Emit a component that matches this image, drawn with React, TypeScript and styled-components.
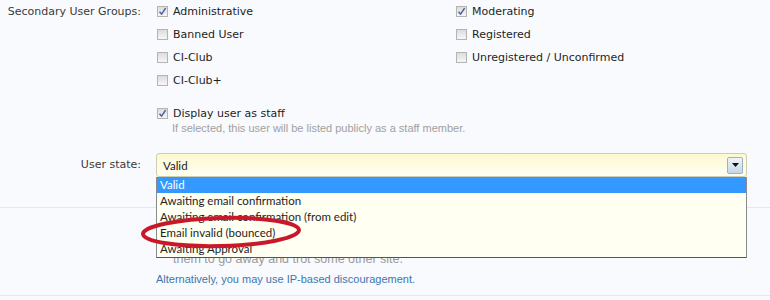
import React from "react";
import styled, { createGlobalStyle } from "styled-components";

const Global = createGlobalStyle`
  html, body { margin: 0; padding: 0; background: #f9fafd; }
  body { font-family: "DejaVu Sans", Verdana, sans-serif; font-size: 11px; color: #2b2b2b; }
  * { box-sizing: border-box; }
`;

const Page = styled.div`
  position: relative;
  width: 770px;
  height: 300px;
  overflow: hidden;
`;

const FormRow = styled.div<{ $top?: number }>`
  display: grid;
  grid-template-columns: 141px 1fr;
  column-gap: 15px;
  margin-top: ${(p) => p.$top ?? 0}px;
  padding-right: 23px;
`;

const Label = styled.div<{ $h: number }>`
  text-align: right;
  color: #3a3a3a;
  line-height: ${(p) => p.$h}px;
  white-space: nowrap;
`;

const Groups = styled.div`
  display: grid;
  grid-template-columns: 299px 1fr;
  grid-template-rows: repeat(4, 23px);
  grid-auto-flow: column;
`;

const Choice = styled.label<{ $h?: number }>`
  display: flex;
  align-items: center;
  gap: 5px;
  height: ${(p) => p.$h ?? 23}px;
  padding-left: 1px;
  color: #1e1e1e;
  white-space: nowrap;
`;

const Box = styled.span`
  display: inline-flex;
  align-items: center;
  justify-content: center;
  width: 11px;
  height: 11px;
  border: 1px solid #b4b4b4;
  background: linear-gradient(#dcdcdc, #f6f6f6);
  flex: none;
`;

const Hint = styled.div`
  font-family: "Liberation Sans", Arial, sans-serif;
  font-size: 11px;
  color: #a0a0a0;
  line-height: 12px;
  padding-left: 16px;
  white-space: nowrap;
`;

const StaffBlock = styled.div`
  margin-top: 12px;
`;

const SelectWrap = styled.div`
  position: relative;
`;

const Select = styled.div`
  display: flex;
  align-items: center;
  justify-content: space-between;
  height: 24px;
  padding: 0 3px 0 6px;
  border: 1px solid #cfcdb0;
  border-radius: 3px;
  background: linear-gradient(#fcf9cf, #fffff2);
  font-family: Lato, "Open Sans", sans-serif;
  font-size: 11.5px;
  color: #222;
`;

const ArrowButton = styled.span`
  display: flex;
  align-items: center;
  justify-content: center;
  width: 16px;
  height: 17px;
  border: 1px solid #9fb0c2;
  border-radius: 2px;
  background: linear-gradient(#eef4fa, #c6d7e8);
`;

const List = styled.div`
  position: absolute;
  left: 0;
  right: 0;
  top: 24px;
  z-index: 2;
  background: #fffff2;
  border: 1px solid #8a8a8a;
  border-top: none;
  border-bottom-color: #555;
  font-family: Lato, "Open Sans", sans-serif;
  font-size: 11.5px;
`;

const Option = styled.div<{ $active?: boolean }>`
  height: 16px;
  line-height: 16px;
  padding-left: 3px;
  background: ${(p) => (p.$active ? "#3399ff" : "transparent")};
  color: ${(p) => (p.$active ? "#fff" : "#1e1e1e")};
  white-space: nowrap;
`;

const Divider = styled.div<{ $top: number }>`
  height: 1px;
  background: #e3e7ef;
  margin-top: ${(p) => p.$top}px;
`;

const Lower = styled.div`
  padding: 45px 0 0 156px;
  font-family: "Liberation Sans", Arial, sans-serif;
  font-size: 11px;
`;

const Faded = styled.div`
  color: #9a9a9a;
  padding-left: 17px;
  font-size: 12.5px;
  line-height: 13px;
`;

const Link = styled.div`
  color: #3b77ad;
  margin-top: 6px;
  line-height: 14px;
  margin-bottom: 9px;
`;

const Annotation = styled.svg`
  position: absolute;
  left: 138px;
  top: 212px;
  z-index: 3;
  pointer-events: none;
`;

const Check = () => (
  <svg width="9" height="9" viewBox="0 0 9 9">
    <path d="M1.5 4.8 L3.6 7.2 L7.6 1.2" fill="none" stroke="#4a5a9a" strokeWidth="1.4" />
  </svg>
);

const CheckItem = ({ label, checked, h }: { label: string; checked?: boolean; h?: number }) => (
  <Choice $h={h}>
    <Box>{checked && <Check />}</Box>
    {label}
  </Choice>
);

export default function App() {
  return (
    <Page>
      <Global />
      <FormRow>
        <Label $h={23}>Secondary User Groups:</Label>
        <div>
          <Groups>
            <CheckItem label="Administrative" checked />
            <CheckItem label="Banned User" />
            <CheckItem label="CI-Club" />
            <CheckItem label="CI-Club+" />
            <CheckItem label="Moderating" checked />
            <CheckItem label="Registered" />
            <CheckItem label="Unregistered / Unconfirmed" />
          </Groups>
          <StaffBlock>
            <CheckItem label="Display user as staff" checked h={18} />
            <Hint>If selected, this user will be listed publicly as a staff member.</Hint>
          </StaffBlock>
        </div>
      </FormRow>
      <FormRow $top={19}>
        <Label $h={24}>User state:</Label>
        <SelectWrap>
          <Select>
            Valid
            <ArrowButton>
              <svg width="7" height="4" viewBox="0 0 7 4">
                <path d="M0 0 H7 L3.5 4 Z" fill="#111" />
              </svg>
            </ArrowButton>
          </Select>
          <List>
            <Option $active>Valid</Option>
            <Option>Awaiting email confirmation</Option>
            <Option>Awaiting email confirmation (from edit)</Option>
            <Option>Email invalid (bounced)</Option>
            <Option>Awaiting Approval</Option>
          </List>
        </SelectWrap>
      </FormRow>
      <Divider $top={30} />
      <Lower>
        <Faded>them to go away and trot some other site.</Faded>
        <Link>Alternatively, you may use IP-based discouragement.</Link>
      </Lower>
      <Divider $top={0} />
      <Annotation width="170" height="42" viewBox="0 0 170 42">
        <ellipse cx="83" cy="20" rx="78" ry="14" fill="none" stroke="#c8182a" strokeWidth="4" transform="rotate(-1.5 83 20)" />
      </Annotation>
    </Page>
  );
}
